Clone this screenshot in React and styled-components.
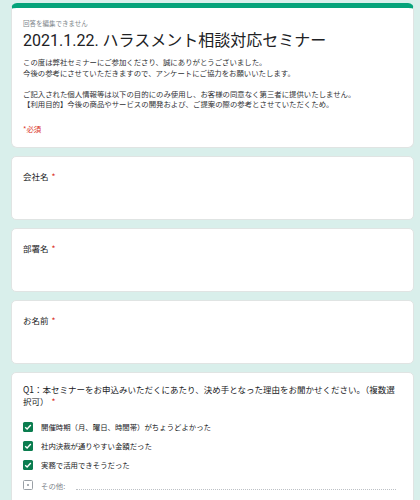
import React from "react";
import styled, { createGlobalStyle } from "styled-components";

const Global = createGlobalStyle`
  html, body { margin: 0; padding: 0; background: #d9efeb; }
  body { font-family: "Noto Sans CJK JP", sans-serif; color: #202124; }
`;

const Page = styled.div`
  display: flex;
  flex-direction: column;
  gap: 8px;
  padding: 3px 6px 20px 11px;
`;

const Card = styled.div`
  background: #fff;
  border: 1px solid #e0e4e3;
  border-radius: 5px;
  box-sizing: border-box;
  overflow: hidden;
  height: ${(p) => (p.$h ? `${p.$h}px` : "auto")};
  padding: ${(p) => p.$pad || "12px 11px"};
`;

const HeaderCard = styled(Card)`
  border-top: 5px solid #05a37a;
  border-radius: 6px;
  padding: 10px 11px 0 11px;
  height: 145px;
`;

const Notice = styled.div`
  font-size: 6.5px;
  color: #80868b;
  line-height: 10px;
`;

const Title = styled.h1`
  margin: 2px 0 5px;
  font-family: Roboto, "Noto Sans CJK JP", sans-serif;
  font-size: 16px;
  font-weight: 400;
  line-height: 22px;
  color: #202124;
`;

const Desc = styled.p`
  margin: 0;
  font-size: 7.4px;
  line-height: 10.5px;
  height: 10.5px;
  color: #303134;
`;

const Gap = styled.div`
  height: 10.5px;
`;

const Required = styled.div`
  margin-top: 14px;
  font-size: 7.4px;
  line-height: 10px;
  color: #d93025;
`;

const Label = styled.div`
  font-size: 8.5px;
  line-height: 12px;
  color: #202124;
`;

const Star = styled.span`
  color: #d93025;
  margin-left: 3px;
`;

const Options = styled.div`
  display: flex;
  flex-direction: column;
  margin-top: 10px;
`;

const Option = styled.div`
  display: flex;
  align-items: center;
  gap: 8px;
  height: ${(p) => (p.$h ? p.$h : 19)}px;
  font-size: 7.4px;
  white-space: nowrap;
  color: ${(p) => (p.$muted ? "#80868b" : "#202124")};
`;

const Box = styled.span`
  width: 10px;
  height: 10px;
  box-sizing: border-box;
  border-radius: 1.5px;
  flex: none;
  display: flex;
  align-items: center;
  justify-content: center;
  background: ${(p) => (p.$checked ? "#0b7d4f" : "#fff")};
  border: ${(p) => (p.$checked ? "none" : "1px solid #9aa0a6")};
`;

const Dot = styled.span`
  width: 1.5px;
  height: 1.5px;
  background: #9aa0a6;
  border-radius: 50%;
`;

const OtherLine = styled.span`
  flex: 1;
  margin-left: 3px;
  margin-right: 6px;
  border-bottom: 1px dotted #bdc1c6;
  height: 8px;
`;

const Check = () => (
  <svg width="8" height="8" viewBox="0 0 8 8">
    <path d="M1.2 4.2 L3.1 6 L6.8 2" fill="none" stroke="#fff" strokeWidth="1.4" />
  </svg>
);

export default function App() {
  return (
    <>
      <Global />
      <Page>
        <HeaderCard>
          <Notice>回答を編集できません</Notice>
          <Title>2021.1.22. ハラスメント相談対応セミナー</Title>
          <Desc>この度は弊社セミナーにご参加くださり、誠にありがとうございました。</Desc>
          <Desc>今後の参考にさせていただきますので、アンケートにご協力をお願いいたします。</Desc>
          <Gap />
          <Desc>ご記入された個人情報等は以下の目的にのみ使用し、お客様の同意なく第三者に提供いたしません。</Desc>
          <Desc>【利用目的】今後の商品やサービスの開発および、ご提案の際の参考とさせていただくため。</Desc>
          <Required>*必須</Required>
        </HeaderCard>
        <Card $h={64} $pad="13px 11px">
          <Label>会社名<Star>*</Star></Label>
        </Card>
        <Card $h={64} $pad="13px 11px">
          <Label>部署名<Star>*</Star></Label>
        </Card>
        <Card $h={64} $pad="13px 11px">
          <Label>お名前<Star>*</Star></Label>
        </Card>
        <Card $pad="10px 11px">
          <Label>
            Q1：本セミナーをお申込みいただくにあたり、決め手となった理由をお聞かせください。（複数選択可）<Star>*</Star>
          </Label>
          <Options>
            <Option>
              <Box $checked><Check /></Box>
              開催時期（月、曜日、時間帯）がちょうどよかった
            </Option>
            <Option>
              <Box $checked><Check /></Box>
              社内決裁が通りやすい金額だった
            </Option>
            <Option>
              <Box $checked><Check /></Box>
              実務で活用できそうだった
            </Option>
            <Option $muted $h={22}>
              <Box><Dot /></Box>
              その他:
              <OtherLine />
            </Option>
          </Options>
        </Card>
      </Page>
    </>
  );
}
